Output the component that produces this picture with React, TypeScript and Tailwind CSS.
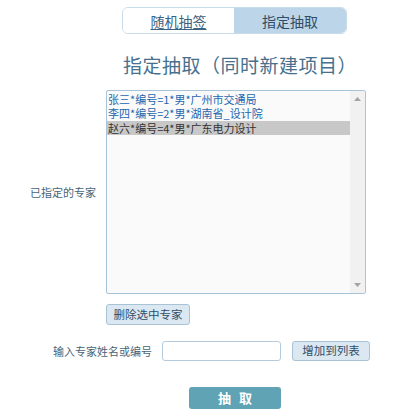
import React from "react";

const font = { fontFamily: '"Noto Sans CJK SC", "Noto Sans", sans-serif' };

export default function App() {
  const rows = [
    { t: "张三*编号=1*男*广州市交通局", sel: false },
    { t: "李四*编号=2*男*湖南省_设计院", sel: false },
    { t: "赵六*编号=4*男*广东电力设计", sel: true },
  ];
  return (
    <div className="w-[412px] h-[420px] bg-white relative overflow-hidden" style={font}>
      <div className="flex flex-col">
        {/* tabs */}
        <div className="ml-[122px] mt-[7px] flex w-[225px] h-[27px] border border-[#c9dcea] rounded-[6px] overflow-hidden text-[14px] leading-none">
          <div className="w-[111px] flex items-center justify-center bg-white text-[#3b6280] underline underline-offset-2">随机抽签</div>
          <div className="flex-1 flex items-center justify-center bg-[#bcd5e9] text-[#2f4e66]">指定抽取</div>
        </div>
        {/* title */}
        <div className="ml-[123px] mt-[19px] text-[19px] leading-[24px] text-[#47708e] tracking-[0.5px]">指定抽取（同时新建项目）</div>
        {/* list row */}
        <div className="flex items-center mt-[13px]">
          <div className="w-[106px] pl-[30px] text-[11px] text-[#466578]">已指定的专家</div>
          <div className="w-[260px] h-[204px] border border-[#a7c4d9] rounded-[2px] bg-[#fafafa] flex">
            <div className="flex-1 flex flex-col text-[11px] leading-[14px] pt-px">
              {rows.map((r) => (
                <div
                  key={r.t}
                  className={
                    "h-[14.3px] pl-px whitespace-nowrap " +
                    (r.sel ? "bg-[#c8c8c8] text-[#333333]" : "text-[#2466ad]")
                  }
                >
                  {r.t}
                </div>
              ))}
            </div>
            <div className="w-[15px] bg-[#f1f1f1] flex flex-col justify-between items-center py-[6px]">
              <svg width="7" height="4" viewBox="0 0 7 4"><path d="M3.5 0L7 4H0Z" fill="#a3a3a3" /></svg>
              <svg width="7" height="4" viewBox="0 0 7 4"><path d="M0 0H7L3.5 4Z" fill="#a3a3a3" /></svg>
            </div>
          </div>
        </div>
        {/* delete button */}
        <div className="ml-[106px] mt-[10px]">
          <div className="w-[84px] h-[21px] border border-[#a9c3d6] rounded-[3px] bg-[#dbe7f1] text-[11.5px] text-[#2e4f68] flex items-center justify-center">删除选中专家</div>
        </div>
        {/* input row */}
        <div className="flex items-center mt-[16px]">
          <div className="w-[162px] pr-[10px] text-right text-[11px] text-[#466578]">输入专家姓名或编号</div>
          <div className="w-[119px] h-[20px] border border-[#b3cbdc] rounded-[3px] bg-white"></div>
          <div className="ml-[11px] w-[78px] h-[20px] border border-[#a9c3d6] rounded-[3px] bg-[#dbe7f1] text-[11.5px] text-[#2e4f68] flex items-center justify-center">增加到列表</div>
        </div>
        {/* submit */}
        <div className="ml-[189px] mt-[26px]">
          <div className="w-[92px] h-[22px] rounded-[3px] bg-[#5fa3b4] text-white text-[13px] font-bold flex items-center justify-center tracking-[8px] pl-[8px]">抽取</div>
        </div>
      </div>
    </div>
  );
}
